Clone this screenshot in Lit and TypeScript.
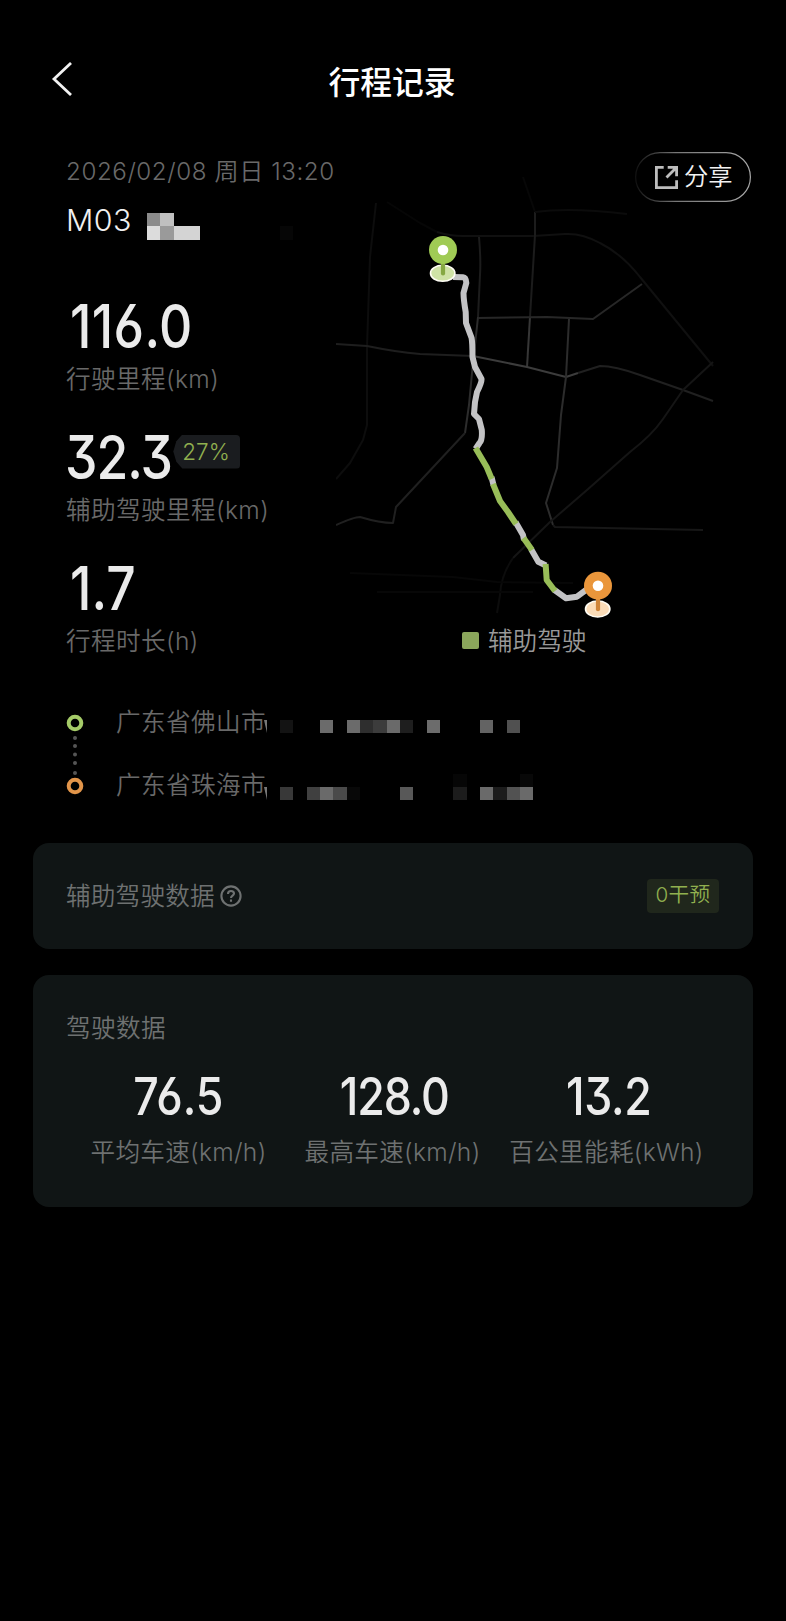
import { LitElement, css, html, svg } from 'lit';
import { customElement, property } from 'lit/decorators.js';
import { styleMap } from 'lit/directives/style-map.js';

interface Stat {
  value: string;
  label: string;
  // letter spacing and left nudge of the big number, in px
  tracking: number;
  nudge: number;
  badge?: string;
}

// [column, row, color] on a 13.33px grid
type Cell = [number, number, string];

@customElement('pixel-mask')
export class PixelMask extends LitElement {
  @property({ attribute: false }) cells: Cell[] = [];
  @property({ type: Number }) columns = 1;

  static styles = css`
    :host {
      display: block;
    }

    svg {
      display: block;
    }
  `;

  render() {
    const size = 13.333;
    return html`
      <svg width=${this.columns * size} height=${2 * size} shape-rendering="crispEdges">
        ${this.cells.map(
          ([col, row, color]) => svg`
            <rect x=${col * size} y=${row * size} width=${size} height=${size} fill=${color} />
          `
        )}
      </svg>
    `;
  }
}

@customElement('trip-map')
export class TripMap extends LitElement {
  static styles = css`
    :host {
      display: block;
    }

    svg {
      display: block;
    }

    .roads,
    .track {
      fill: none;
      stroke-linejoin: round;
    }

    .roads {
      stroke-width: 2;
    }

    .track {
      stroke-width: 6;
    }

    .manual {
      stroke: #c3c3c5;
    }

    .assisted {
      stroke: #98bd58;
    }
  `;

  private roads: [string, string][] = [
    ['#0d0d0d', 'M376 203L370 257L367 347V425L363 440L350 463L336 479'],
    ['#060606', 'M387 202L420 223L437 232'],
    ['#101010', 'M437 232Q450 236 463 236H533L565 234Q582 233 600 243Q622 254 640 277L713 366'],
    ['#070707', 'M523 177L535 212'],
    ['#1c1c1c', 'M535 212V235L530 317'],
    ['#363636', 'M530 317L527 367'],
    ['#0b0b0b', 'M535 212Q570 207 627 214'],
    ['#1c1c1c', 'M479 237Q481 260 480 275L478 317'],
    ['#2c2c2c', 'M478 317L472 373L469 405L465 433'],
    ['#202020', 'M465 433L396 507L393 523Q380 523 360 517Q354 517 336 525'],
    ['#272727', 'M478 318L547 317L593 319L642 284'],
    ['#1e1e1e', 'M336 344L367 346Q396 352 420 354L473 356'],
    ['#3c3c3c', 'M473 356L527 367L566 377L578 373'],
    ['#202020', 'M578 373L600 366Q615 366 640 375L683 390L713 401'],
    ['#2c2c2c', 'M569 319L566 377L561 415L557 468L546 503L553 525'],
    ['#171717', 'M553 525L555 527L703 530'],
    ['#151515', 'M713 362L683 390L663 419Q652 435 630 452L587 490L550 522L513 558'],
    ['#0c0c0c', 'M513 558Q501 575 500 595L497 613'],
    ['#070707', 'M350 573L453 577L497 582L573 583M377 592H533'],
  ];

  private renderPin(x: number, y: number, color: string, stem: string, base: string) {
    return svg`
      <g transform="translate(${x} ${y})">
        <ellipse cx="-0.3" cy="23.3" rx="12.2" ry="8" fill=${base} stroke="#fffdf5" stroke-width="1.6" />
        <path d="M0 12V23.5" stroke=${stem} stroke-width="4.2" stroke-linecap="round" />
        <circle r="14" fill=${color} />
        <circle r="5.3" fill="#fff" />
      </g>
    `;
  }

  render() {
    return html`
      <svg width="400" height="479" viewBox="336 150 400 479">
        <g class="roads">${this.roads.map(([color, d]) => svg`<path stroke=${color} d=${d} />`)}</g>
        <g class="track">
          <path
            class="manual"
            d="M453 277L463 277.3Q466 277.5 466.3 283L463.5 293Q463.6 300 465.7 312L466 323L471.6 338Q472.5 343 472.5 357L475 367L481.5 379Q482 382 477 392L475 402L474 414L479 419L481.8 430Q482.5 440 479.5 443L475.5 449
              M491.5 477L493.5 485M515.5 522L523 535L524 540M531 549L538.3 561.7L546 565.5M554.5 590L566 598.3L577 596.7L590 587"
          />
          <path
            class="assisted"
            d="M475.5 448L486.7 467L491.7 479M493 484L500 501L508 512L516 524M523.5 538L532 550M545.6 564L546.7 580L555 591"
          />
        </g>
        ${this.renderPin(443, 250, '#a0cb55', '#86a843', '#cfe2a6')}
        ${this.renderPin(598, 585.7, '#ea963b', '#d08539', '#fbdcb8')}
      </svg>
    `;
  }
}

@customElement('app-root')
export class AppRoot extends LitElement {
  static styles = css`
    :host {
      display: block;
      min-height: 1621px;
      background: #000;
      color: #696969;
      font-family: Inter, 'Noto Sans CJK SC', sans-serif;
      font-size: 24.6px;
      font-weight: 350;
      letter-spacing: 0.4px;
      white-space: nowrap;
    }

    svg {
      display: block;
    }

    header {
      display: grid;
      grid-template-columns: 100px 1fr 102px;
      align-items: center;
      height: 150px;
      padding-top: 11px;
      box-sizing: border-box;
    }

    .back {
      margin: 0 0 3px 50px;
    }

    h1 {
      margin: 4px 0 0;
      color: #fff;
      font-size: 31.8px;
      font-weight: 500;
      line-height: 40px;
      letter-spacing: 0;
      text-align: center;
    }

    .trip {
      position: relative;
      display: grid;
      grid-template-columns: 270px 1fr;
      padding-left: 66px;
      height: 515px;
    }

    .date {
      height: 44px;
      font-size: 24.2px;
      line-height: 44px;
      letter-spacing: 0.55px;
    }

    .car {
      display: flex;
      align-items: center;
      gap: 15px;
      height: 52px;
      margin-bottom: 50px;
      color: #f0f0f0;
      font-size: 30.4px;
    }

    .car pixel-mask {
      margin-top: 13px;
    }

    .stat {
      height: 131px;
    }

    .value {
      color: #ebebeb;
      font-weight: 460;
      font-feature-settings: 'cv03', 'cv09';
    }

    .value .number {
      display: inline-block;
      transform: scaleX(0.86);
    }

    .stat .value {
      display: flex;
      align-items: center;
      height: 60px;
      font-size: 60px;
    }

    .stat .number {
      transform-origin: left;
    }

    .label {
      line-height: 47px;
    }

    .ratio {
      width: 67px;
      height: 34px;
      margin: -11px 0 0 -17px;
      border-radius: 4px;
      background: #1a1c1f;
      clip-path: polygon(0 50%, 3px 20%, 9px 0, 100% 0, 100% 100%, 9px 100%, 3px 80%);
      color: #91b04f;
      font-size: 22.5px;
      font-weight: 300;
      line-height: 34px;
      letter-spacing: 0;
      text-indent: 9px;
    }

    .legend {
      display: flex;
      align-items: center;
      gap: 9px;
      height: 24px;
      margin-left: 126px;
      color: #999;
    }

    .legend span {
      margin-top: -4px;
      letter-spacing: 0;
    }

    .legend i {
      width: 17px;
      height: 17px;
      margin-top: -1px;
      border-radius: 2px;
      background: #8ba65b;
    }

    .share {
      position: absolute;
      top: 2px;
      right: 35px;
      width: 116px;
      height: 50px;
    }

    .share div {
      position: absolute;
      inset: 0;
      display: flex;
      align-items: center;
      gap: 6px;
      padding-left: 20px;
      color: #f2f2f2;
      font-size: 24.3px;
      letter-spacing: 0;
    }

    .share span {
      margin-top: -5px;
    }

    .route {
      display: grid;
      grid-template-columns: 16px 1fr;
      column-gap: 33px;
      height: 127px;
      margin: 25px 0 26px 67px;
    }

    .place {
      display: flex;
      align-items: center;
      height: 63px;
    }

    .place span {
      width: 148px;
      margin-top: -4px;
    }

    .place i {
      width: 3px;
      height: 13px;
      margin: 10px 13px 0 0;
      background: #777;
      clip-path: polygon(0 0, 100% 0, 100% 100%);
    }

    .place pixel-mask {
      margin-top: -3px;
    }

    .place.end i {
      margin-top: 18px;
    }

    .place.end pixel-mask {
      margin-top: 5px;
    }

    .card {
      margin: 0 33px 26px;
      padding: 0 34px 0 33px;
      border-radius: 16px;
      background: #101515;
      color: #6e7171;
    }

    .assist {
      display: flex;
      align-items: center;
      height: 106px;
    }

    .title {
      margin-top: -4px;
      letter-spacing: 0.2px;
    }

    .assist svg {
      margin-left: 5px;
    }

    .tag {
      width: 72px;
      height: 34px;
      margin-left: auto;
      border-radius: 4px;
      background: #20271c;
      color: #91b04f;
      font-size: 20.6px;
      line-height: 31px;
      text-align: center;
    }

    .driving {
      height: 232px;
      padding-top: 30px;
      box-sizing: border-box;
    }

    .metrics {
      display: grid;
      grid-template-columns: repeat(3, 214px);
      justify-content: center;
      margin: 12px 0 0;
      text-align: center;
    }

    .metrics .value {
      height: 65px;
      font-size: 52px;
      line-height: 66px;
    }

    .metrics .label {
      letter-spacing: 0.3px;
    }
  `;

  private stats: Stat[] = [
    { value: '116.0', label: '行驶里程(km)', tracking: 0.4, nudge: 4 },
    { value: '32.3', label: '辅助驾驶里程(km)', tracking: -1.2, nudge: -1, badge: '27%' },
    { value: '1.7', label: '行程时长(h)', tracking: 0, nudge: 4 },
  ];

  private metrics: Stat[] = [
    { value: '76.5', label: '平均车速(km/h)', tracking: 0, nudge: 0 },
    { value: '128.0', label: '最高车速(km/h)', tracking: -1.3, nudge: 2 },
    { value: '13.2', label: '百公里能耗(kWh)', tracking: -0.4, nudge: 2 },
  ];

  private carMask: Cell[] = [
    [0, 0, '#8b8b8b'], [1, 0, '#c0c0c0'], [0, 1, '#dcdcdc'], [1, 1, '#9a9a9a'],
    [2, 1, '#d4d4d4'], [3, 1, '#d4d4d4'], [10, 1, '#060606'],
  ];

  private startMask: Cell[] = [
    [0, 1, '#131313'], [3, 1, '#6b6b6b'], [5, 1, '#6b6b6b'], [6, 1, '#2e2e2e'],
    [7, 1, '#3c3c3c'], [8, 1, '#6a6a6a'], [9, 1, '#1e1e1e'], [11, 1, '#6c6c6c'],
    [15, 1, '#636363'], [17, 1, '#505050'],
  ];

  private endMask: Cell[] = [
    [0, 1, '#383838'], [2, 1, '#404040'], [3, 1, '#6a6a6a'], [4, 1, '#4a4a4a'],
    [5, 1, '#080808'], [9, 1, '#585858'], [13, 0, '#060606'], [13, 1, '#1c1c1c'],
    [15, 1, '#6a6a6a'], [16, 1, '#1c1c1c'], [17, 1, '#525252'], [18, 0, '#080808'],
    [18, 1, '#6a6a6a'],
  ];

  render() {
    return html`
      <header>
        <svg class="back" width="22" height="34" fill="none" stroke="#f2f2f2" stroke-width="2.8">
          <path d="M21 1L4 17L21 33" />
        </svg>
        <h1>行程记录</h1>
      </header>

      <section class="trip">
        <div>
          <div class="date">2026/02/08 周日 13:20</div>
          <div class="car">
            <span>M03</span>
            <pixel-mask .cells=${this.carMask} .columns=${11}></pixel-mask>
          </div>
          ${this.stats.map((s) => html`<div class="stat">${this.renderStat(s)}</div>`)}
        </div>
        <div>
          <trip-map></trip-map>
          <div class="legend"><i></i><span>辅助驾驶</span></div>
        </div>
        ${this.renderShare()}
      </section>

      <section class="route">
        <svg width="16" height="127" viewBox="0 0 16 127" overflow="visible">
          <g fill="none" stroke-width="4">
            <circle cx="8" cy="33" r="6.3" stroke="#a5cb68" />
            <circle cx="8" cy="96" r="6.3" stroke="#e2954a" />
          </g>
          <g fill="#555">
            ${[48, 56, 64.5, 73, 83].map((y) => svg`<circle cx="8" cy=${y} r="2" />`)}
          </g>
        </svg>
        <div>
          <div class="place">
            <span>广东省佛山市</span><i></i>
            <pixel-mask .cells=${this.startMask} .columns=${19}></pixel-mask>
          </div>
          <div class="place end">
            <span>广东省珠海市</span><i></i>
            <pixel-mask .cells=${this.endMask} .columns=${19}></pixel-mask>
          </div>
        </div>
      </section>

      <section class="card assist">
        <span class="title">辅助驾驶数据</span>
        <svg width="22" height="22" viewBox="0 0 22 22" fill="none" stroke="#6e7171" stroke-width="2.1">
          <circle cx="11" cy="11" r="9.6" />
          <path d="M8 8.9C8 7 9.3 6 11 6S14 7 14 8.6C14 10.5 11 10.7 11 13M11 14.6V16.8" />
        </svg>
        <span class="tag">0干预</span>
      </section>

      <section class="card driving">
        <div class="label">驾驶数据</div>
        <div class="metrics">
          ${this.metrics.map((m) => html`<div>${this.renderStat(m)}</div>`)}
        </div>
      </section>
    `;
  }

  private renderStat(stat: Stat) {
    const spacing = {
      letterSpacing: `${stat.tracking}px`,
      translate: `${stat.nudge}px`,
    };
    return html`
      <div class="value">
        <span class="number" style=${styleMap(spacing)}>${stat.value}</span>
        ${stat.badge ? html`<span class="ratio">${stat.badge}</span>` : ''}
      </div>
      <div class="label">${stat.label}</div>
    `;
  }

  private renderShare() {
    return html`
      <div class="share">
        <svg width="116" height="50" fill="none">
          <defs>
            <linearGradient id="edge">
              <stop offset="0" stop-color="#111" />
              <stop offset="0.35" stop-color="#777" />
              <stop offset="1" stop-color="#a8a8a8" />
            </linearGradient>
          </defs>
          <rect x="0.6" y="0.6" width="114.8" height="48.8" rx="24.4" fill="#000" stroke="url(#edge)" stroke-width="1.2" />
        </svg>
        <div>
          <svg width="23" height="23" viewBox="0 0 23 23" fill="none" stroke="#bdbdbd" stroke-width="2.8">
            <path d="M8.7 1.4H1.4V21.6H21.6V14.3M12.7 1.4H21.6V10.3M21.2 1.8L11.5 11.5" />
          </svg>
          <span>分享</span>
        </div>
      </div>
    `;
  }
}

declare global {
  interface HTMLElementTagNameMap {
    'pixel-mask': PixelMask;
    'trip-map': TripMap;
    'app-root': AppRoot;
  }
}
